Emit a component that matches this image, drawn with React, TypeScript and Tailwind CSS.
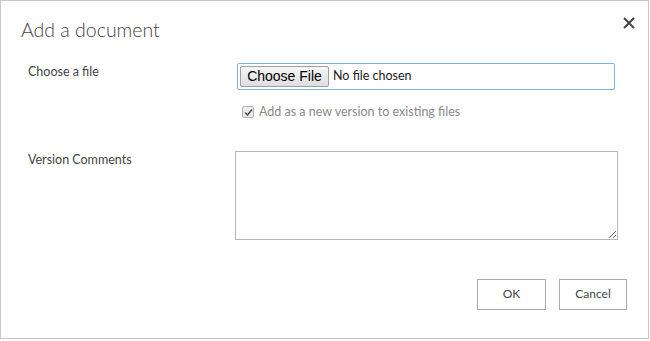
import React from "react";

export default function App() {
  const seg = { fontFamily: 'Lato, "Open Sans", sans-serif' };
  return (
    <div className="w-[650px] h-[341px] bg-white">
      <div
        className="relative w-[649px] h-[339px] border border-[#c6c6c6] bg-white text-[#444444]"
        style={seg}
      >
        <div className="flex items-start justify-between pl-[20px] pr-[13px] pt-[14px]">
          <div className="text-[19.5px] font-light leading-[29px] text-[#444444]">Add a document</div>
          <svg width="12" height="12" viewBox="0 0 12 12" className="mt-[2px]">
            <path d="M1 1 L11 11 M11 1 L1 11" stroke="#444" strokeWidth="2" />
          </svg>
        </div>

        <div className="mt-[19px] flex">
          <div className="w-[236px] pl-[27px] text-[12.5px] leading-[18px] pt-0">Choose a file</div>
          <div className="flex flex-col">
            <div className="w-[378px] h-[27px] border border-[#7fb0e3] rounded-[2px] flex items-center pl-[2px]">
              <button
                className="h-[21px] w-[89px] border border-[#a0a0a0] rounded-[2px] bg-gradient-to-b from-[#f6f6f6] to-[#dedede] text-[14px] text-black leading-[19px]"
                style={{ fontFamily: '"Liberation Sans", Arial, sans-serif' }}
              >
                Choose File
              </button>
              <span className="ml-[4px] text-[12.5px] text-[#222]">No file chosen</span>
            </div>
            <label className="mt-[13px] ml-[5px] flex items-center text-[12.5px] text-[#8a8a8a]">
              <span className="w-[12px] h-[12px] border border-[#b0b0b0] rounded-[2px] bg-[#ececec] flex items-center justify-center">
                <svg width="9" height="9" viewBox="0 0 9 9">
                  <path d="M1 4.5 L3.5 7 L8 1.5" stroke="#555" strokeWidth="1.6" fill="none" />
                </svg>
              </span>
              <span className="ml-[5px]">Add as a new version to existing files</span>
            </label>
          </div>
        </div>

        <div className="mt-[29px] flex">
          <div className="w-[234px] pl-[27px] text-[12.5px] leading-[18px] pt-0">Version Comments</div>
          <textarea className="w-[383px] h-[89px] border border-[#b5b5b5] bg-white resize-y outline-none" />
        </div>

        <div className="mt-[39px] flex justify-end gap-[13px] pr-[21px]">
          <button className="w-[69px] h-[31px] border border-[#ababab] bg-white text-[12px] text-[#444]">OK</button>
          <button className="w-[68px] h-[31px] border border-[#ababab] bg-white text-[12px] text-[#444]">Cancel</button>
        </div>
      </div>
    </div>
  );
}
